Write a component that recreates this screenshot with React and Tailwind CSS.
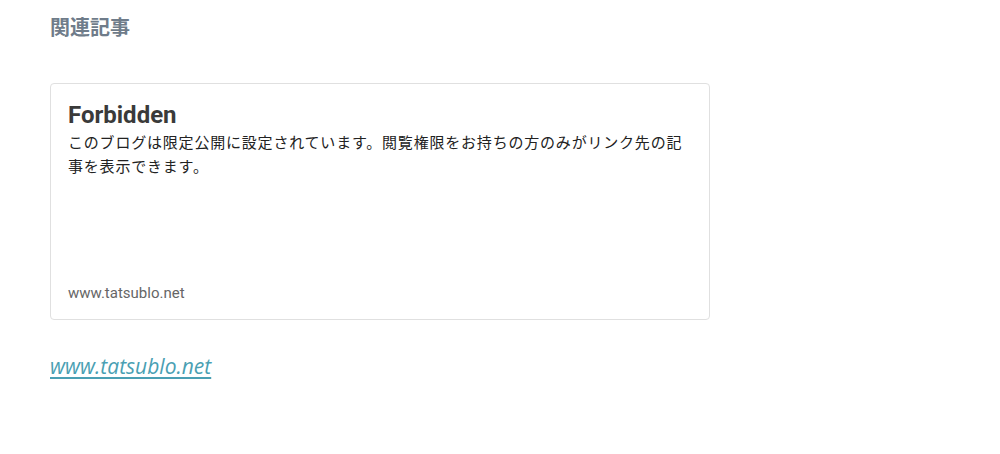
export default function App() {
  return (
    <div className="min-h-[454px] bg-white px-[50px] pt-[13px] font-['Noto_Sans','Noto_Sans_CJK_JP',sans-serif]">
      <h3 className="font-['Noto_Sans_CJK_JP',sans-serif] text-[20px] font-bold leading-[28px] text-[#6f7c8a]">
        関連記事
      </h3>

      <div className="mt-[42px] flex h-[237px] w-[660px] flex-col rounded-[4px] border border-[#e0e0e0] px-[17px] pt-[17px] pb-[17px]">
        <div className="font-['Roboto',sans-serif] text-[24px] font-bold leading-[28px] text-[#3a3a3a]">
          Forbidden
        </div>
        <p className="mt-[1px] font-['Noto_Sans_CJK_JP',sans-serif] text-[15px] leading-[24px] tracking-[0.8px] text-[#222]">
          このブログは限定公開に設定されています。閲覧権限をお持ちの方のみがリンク先の記事を表示できます。
        </p>
        <div className="mt-auto font-['Roboto',sans-serif] text-[15px] leading-[18px] text-[#666]">
          www.tatsublo.net
        </div>
      </div>

      <div className="mt-[32px]">
        <a href="#" className="font-['Open_Sans',sans-serif] text-[21px] italic leading-[28px] text-[#4a9fb3] underline underline-offset-[3px]">
          www.tatsublo.net
        </a>
      </div>
    </div>
  );
}
